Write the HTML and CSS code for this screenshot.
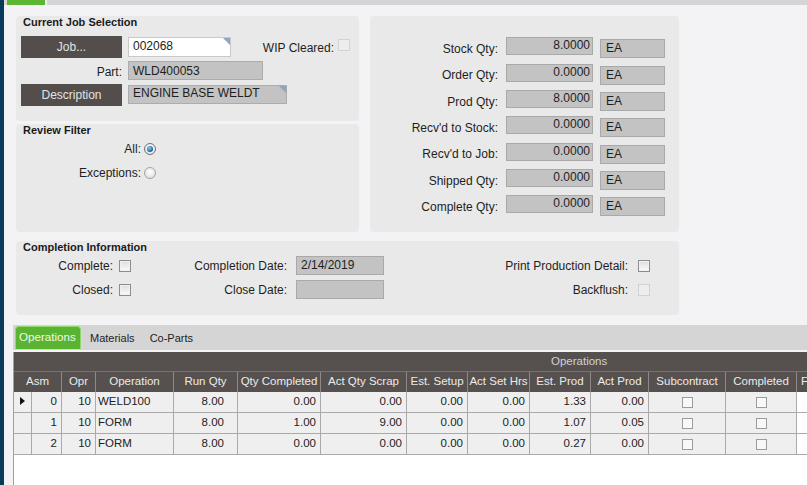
FILE: index.html
```html
<!DOCTYPE html>
<html>
<head>
<meta charset="utf-8">
<link rel="stylesheet" href="styles.css">
</head>
<body>
<div class="app">
  <div class="stripe"></div>
  <div class="main">
    <div class="topbar"><div class="toptab"></div></div>

    <div class="upper">
      <div class="leftcol">
        <section class="panel jobpanel">
          <div class="ptitle">Current Job Selection</div>
          <div class="jrow r1">
            <button class="btn">Job...</button>
            <div class="field white">002068<span class="corner"></span></div>
            <span class="lbl wip">WIP Cleared:</span>
            <span class="chk disabled wipchk"></span>
          </div>
          <div class="jrow r2">
            <span class="lbl side">Part:</span>
            <div class="field grey part">WLD400053</div>
          </div>
          <div class="jrow r3">
            <button class="btn">Description</button>
            <div class="field grey desc">ENGINE BASE WELDT<span class="corner"></span></div>
          </div>
        </section>
        <section class="panel filterpanel">
          <div class="ptitle">Review Filter</div>
          <div class="frow first"><span class="lbl flbl">All:</span><span class="radio on"></span></div>
          <div class="frow"><span class="lbl flbl">Exceptions:</span><span class="radio"></span></div>
        </section>
      </div>

      <section class="panel qtypanel">
        <div class="qrow"><span class="lbl qlbl">Stock Qty:</span><span class="qval">8.0000</span><span class="qunit">EA</span></div>
        <div class="qrow"><span class="lbl qlbl">Order Qty:</span><span class="qval">0.0000</span><span class="qunit">EA</span></div>
        <div class="qrow"><span class="lbl qlbl">Prod Qty:</span><span class="qval">8.0000</span><span class="qunit">EA</span></div>
        <div class="qrow"><span class="lbl qlbl">Recv'd to Stock:</span><span class="qval">0.0000</span><span class="qunit">EA</span></div>
        <div class="qrow"><span class="lbl qlbl">Recv'd to Job:</span><span class="qval">0.0000</span><span class="qunit">EA</span></div>
        <div class="qrow"><span class="lbl qlbl">Shipped Qty:</span><span class="qval">0.0000</span><span class="qunit">EA</span></div>
        <div class="qrow"><span class="lbl qlbl">Complete Qty:</span><span class="qval">0.0000</span><span class="qunit">EA</span></div>
      </section>
    </div>

    <section class="panel complpanel">
      <div class="ptitle">Completion Information</div>
      <div class="crow first">
        <span class="lbl c1l">Complete:</span><span class="chk c1c"></span>
        <span class="lbl c2l">Completion Date:</span><span class="cdate">2/14/2019</span>
        <span class="lbl c3l">Print Production Detail:</span><span class="chk c3c"></span>
      </div>
      <div class="crow">
        <span class="lbl c1l">Closed:</span><span class="chk c1c"></span>
        <span class="lbl c2l">Close Date:</span><span class="cdate r2d"></span>
        <span class="lbl c3l">Backflush:</span><span class="chk disabled c3c"></span>
      </div>
    </section>

    <div class="tabs">
      <span class="tab active">Operations</span>
      <span class="tab mat">Materials</span>
      <span class="tab co">Co-Parts</span>
    </div>

    <div class="gridwrap">
      <div class="grid">
        <div class="band">Operations</div>

        <div class="hc span2">Asm</div>
        <div class="hc">Opr</div>
        <div class="hc">Operation</div>
        <div class="hc">Run Qty</div>
        <div class="hc">Qty Completed</div>
        <div class="hc">Act Qty Scrap</div>
        <div class="hc">Est. Setup</div>
        <div class="hc">Act Set Hrs</div>
        <div class="hc">Est. Prod</div>
        <div class="hc">Act Prod</div>
        <div class="hc">Subcontract</div>
        <div class="hc">Completed</div>
        <div class="hc last">Final Opr</div>

        <div class="dc rh"><span class="arrow"></span></div>
        <div class="dc">0</div>
        <div class="dc">10</div>
        <div class="dc txt">WELD100</div>
        <div class="dc rq">8.00</div>
        <div class="dc">0.00</div>
        <div class="dc">0.00</div>
        <div class="dc">0.00</div>
        <div class="dc">0.00</div>
        <div class="dc">1.33</div>
        <div class="dc">0.00</div>
        <div class="dc cc"><span class="gchk"></span></div>
        <div class="dc cc"><span class="gchk"></span></div>
        <div class="dc wc"></div>

        <div class="dc rh"></div>
        <div class="dc">1</div>
        <div class="dc">10</div>
        <div class="dc txt">FORM</div>
        <div class="dc rq">8.00</div>
        <div class="dc">1.00</div>
        <div class="dc">9.00</div>
        <div class="dc">0.00</div>
        <div class="dc">0.00</div>
        <div class="dc">1.07</div>
        <div class="dc">0.05</div>
        <div class="dc cc"><span class="gchk"></span></div>
        <div class="dc cc"><span class="gchk"></span></div>
        <div class="dc wc"></div>

        <div class="dc rh"></div>
        <div class="dc">2</div>
        <div class="dc">10</div>
        <div class="dc txt">FORM</div>
        <div class="dc rq">8.00</div>
        <div class="dc">0.00</div>
        <div class="dc">0.00</div>
        <div class="dc">0.00</div>
        <div class="dc">0.00</div>
        <div class="dc">0.27</div>
        <div class="dc">0.00</div>
        <div class="dc cc"><span class="gchk"></span></div>
        <div class="dc cc"><span class="gchk"></span></div>
        <div class="dc wc"></div>
      </div>
    </div>
  </div>
</div>
</body>
</html>
```
FILE: styles.css
```css
html, body {
  margin: 0;
  padding: 0;
}
body {
  width: 807px;
  height: 485px;
  overflow: hidden;
  background: #f3f3f5;
  font-family: "Liberation Sans", Arial, sans-serif;
  font-size: 12px;
  color: #1e1e1e;
}
.app {
  display: flex;
  height: 485px;
}
.stripe {
  width: 4px;
  flex: none;
  background: #0a3a5a;
}
.main {
  flex: 1;
  min-width: 0;
  display: flex;
  flex-direction: column;
  overflow: hidden;
}
.topbar {
  height: 5px;
  flex: none;
  background: #d5d5d5;
  display: flex;
}
.toptab {
  margin-left: 3px;
  width: 38px;
  background: #5db631;
  border-right: 2px solid #eeeeee;
}

/* panels */
.upper {
  display: flex;
  gap: 11px;
  margin: 11px 0 0 12px;
  height: 216px;
  flex: none;
}
.leftcol {
  width: 343px;
  display: flex;
  flex-direction: column;
  gap: 3px;
}
.panel {
  background: #e9e9e9;
  border-radius: 4px;
  box-sizing: border-box;
}
.ptitle {
  font-weight: bold;
  font-size: 11px;
  line-height: 13px;
  padding-left: 7px;
  color: #1a1a1a;
}
.lbl {
  line-height: 14px;
  white-space: nowrap;
}

/* job selection */
.jobpanel {
  height: 105px;
}
.jrow {
  display: flex;
  align-items: flex-start;
  padding: 0 9px 0 5px;
}
.r1 { margin-top: 7px; height: 22px; }
.r2 { margin-top: 3px; height: 19px; }
.r3 { margin-top: 4px; height: 22px; }
.btn {
  width: 101px;
  height: 22px;
  border: 0;
  padding: 0;
  background: #534e4c;
  color: #e2e2e2;
  font-family: inherit;
  font-size: 12px;
  line-height: 20px;
}
.field {
  position: relative;
  box-sizing: border-box;
  border: 1px solid #acacac;
  padding: 1px 4px 0;
  line-height: 14px;
  margin-left: 6px;
  white-space: nowrap;
  overflow: hidden;
}
.field.white {
  background: #ffffff;
  border-color: #c9c9c9;
  width: 103px;
  height: 20px;
  margin-top: 1px;
}
.field.grey {
  background: #c3c3c3;
}
.part {
  width: 135px;
  height: 19px;
  padding-top: 2px;
}
.desc {
  width: 159px;
  height: 19px;
  margin-top: 1px;
  padding-top: 0;
}
.corner {
  position: absolute;
  top: 0;
  right: 0;
  width: 0;
  height: 0;
  border-top: 7px solid #8ea6c6;
  border-left: 7px solid transparent;
}
.wip {
  margin-left: auto;
  margin-top: 5px;
}
.wipchk {
  margin-left: 4px;
  margin-top: 3px;
}
.side {
  width: 101px;
  text-align: right;
  margin-top: 4px;
}

/* checkboxes / radios */
.chk {
  display: block;
  flex: none;
  width: 12px;
  height: 12px;
  box-sizing: border-box;
  border: 1px solid #8c8c8c;
  background: linear-gradient(#dedede, #fbfbfb);
  box-shadow: inset 0 0 0 1px #f1f1f1;
}
.chk.disabled {
  border-color: #d2d2d2;
  background: #ededed;
  box-shadow: none;
}
.radio {
  position: relative;
  display: block;
  flex: none;
  width: 12px;
  height: 12px;
  box-sizing: border-box;
  margin-left: 3px;
  border-radius: 50%;
  border: 1px solid #a3a3a3;
  background: radial-gradient(circle at 50% 40%, #ffffff, #d8d8d8);
}
.radio.on {
  border-color: #6b7680;
}
.radio.on::after {
  content: "";
  position: absolute;
  left: 2px;
  top: 2px;
  width: 6px;
  height: 6px;
  border-radius: 50%;
  background: radial-gradient(circle at 40% 35%, #8cd0f4, #1b5c8e 70%);
}

/* review filter */
.filterpanel {
  height: 109px;
}
.frow {
  display: flex;
  align-items: center;
  height: 24px;
}
.frow.first {
  margin-top: 0.5px;
}
.flbl {
  width: 125px;
  text-align: right;
}

/* quantities */
.qtypanel {
  width: 309px;
  height: 216px;
  padding-top: 21.3px;
  display: flex;
  flex-direction: column;
}
.qrow {
  display: flex;
  align-items: flex-start;
  height: 26.33px;
  flex: none;
}
.qlbl {
  width: 128px;
  text-align: right;
  padding-top: 4.7px;
}
.qval {
  margin-left: 8px;
  width: 87px;
  height: 18px;
  box-sizing: border-box;
  background: #c3c3c3;
  border: 1px solid #a9a9a9;
  text-align: right;
  padding-right: 2px;
  line-height: 14px;
}
.qunit {
  margin-left: 7px;
  margin-top: 2px;
  width: 65px;
  height: 19px;
  box-sizing: border-box;
  background: #c3c3c3;
  border: 1px solid #a9a9a9;
  padding: 1px 0 0 5px;
  line-height: 14px;
}

/* completion */
.complpanel {
  margin: 9px 0 0 12px;
  width: 663px;
  height: 74px;
  flex: none;
}
.crow {
  display: flex;
  align-items: flex-start;
  height: 24px;
  padding-right: 29px;
}
.crow.first {
  margin-top: 2px;
}
.c1l {
  width: 97px;
  text-align: right;
  margin-top: 2.8px;
}
.c1c {
  margin-left: 6px;
  margin-top: 4px;
}
.c2l {
  width: 156px;
  text-align: right;
  margin-top: 2.8px;
}
.cdate {
  margin-left: 9px;
  width: 88px;
  height: 19px;
  box-sizing: border-box;
  background: #c3c3c3;
  border: 1px solid #a9a9a9;
  padding: 1px 4px 0;
  line-height: 14px;
}
.cdate.r2d {
  height: 18.5px;
}
.c3l {
  margin-left: auto;
  margin-top: 2.8px;
}
.c3c {
  margin-left: 10px;
  margin-top: 4px;
}

/* tabs */
.tabs {
  display: flex;
  align-items: flex-start;
  height: 25px;
  flex: none;
  margin: 10px 0 0 9px;
  background: #d5d5d5;
}
.tab {
  font-size: 11px;
  line-height: 14px;
  white-space: nowrap;
  color: #1e1e1e;
}
.tab.active {
  margin: 1px 0 0 2px;
  width: 66px;
  height: 23px;
  box-sizing: border-box;
  padding: 3px 0 0 3px;
  background: #5bb431;
  border: 1px solid #92d66c;
  border-bottom: 0;
  border-radius: 4px 4px 0 0;
  color: #eef8e6;
  font-size: 11.6px;
}
.tab.mat { margin: 6px 0 0 9px; }
.tab.co { margin: 6px 0 0 15px; }

/* grid */
.gridwrap {
  flex: 1;
  margin: 2px 0 0 9px;
  background: #ffffff;
  border-left: 1px solid #a0a0a0;
  overflow: hidden;
}
.grid {
  display: grid;
  grid-template-columns: 18px 30px 34px 78px 64px 83px 86px 61px 62px 61px 58px 77px 71px 80px;
  width: 863px;
  font-size: 11.5px;
}
.band {
  grid-column: 1 / -1;
  height: 20px;
  box-sizing: border-box;
  background: #56514f;
  border-bottom: 1px solid #75716f;
  color: #d2d2d2;
  line-height: 19px;
  padding-left: 537px;
}
.hc {
  height: 20px;
  box-sizing: border-box;
  background: #56514f;
  color: #ebebeb;
  border-right: 1px solid #8e8a88;
  text-align: center;
  line-height: 19px;
  white-space: nowrap;
  overflow: hidden;
}
.hc.span2 {
  grid-column: span 2;
}
.hc.last {
  text-align: left;
  padding-left: 4px;
}
.dc {
  height: 21px;
  box-sizing: border-box;
  background: #efefef;
  border-right: 1px solid #aaaaaa;
  border-bottom: 1px solid #aaaaaa;
  line-height: 19px;
  text-align: right;
  padding-right: 4px;
  white-space: nowrap;
  color: #222222;
}
.dc.txt {
  text-align: left;
  padding: 0 0 0 2px;
}
.dc.rq {
  padding-right: 13px;
}
.dc.rh {
  padding: 0 0 0 6px;
  text-align: left;
}
.dc.cc {
  padding: 0;
}
.dc.wc {
  background: #ffffff;
}
.arrow {
  display: block;
  margin-top: 5px;
  width: 0;
  height: 0;
  border-left: 5px solid #111111;
  border-top: 4.5px solid transparent;
  border-bottom: 4.5px solid transparent;
}
.gchk {
  display: block;
  margin: 4.5px auto 0;
  width: 11px;
  height: 11px;
  box-sizing: border-box;
  border: 1px solid #9c9c9c;
  background: #f8f8f8;
}
```
